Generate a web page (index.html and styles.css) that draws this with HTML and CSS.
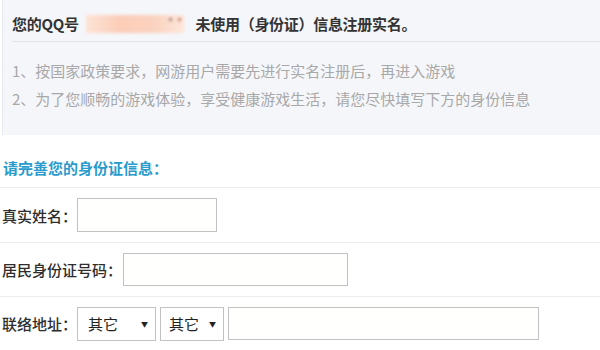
FILE: index.html
```html
<!DOCTYPE html>
<html lang="zh-CN">
<head>
<meta charset="utf-8">
<title>实名注册</title>
<link rel="stylesheet" href="styles.css">
</head>
<body>
<div class="panel">
  <div class="title">
    <span>您的QQ号</span><span class="masked"><span class="dot d1"></span><span class="dot d2"></span></span><span>未使用（身份证）信息注册实名。</span>
  </div>
  <div class="notes">
    <p>1、按国家政策要求，网游用户需要先进行实名注册后，再进入游戏</p>
    <p>2、为了您顺畅的游戏体验，享受健康游戏生活，请您尽快填写下方的身份信息</p>
  </div>
</div>
<div class="heading">请完善您的身份证信息：</div>
<div class="row r1">
  <label class="label">真实姓名：</label><input class="field f-name" type="text">
</div>
<div class="row r2">
  <label class="label">居民身份证号码：</label><input class="field f-id" type="text">
</div>
<div class="row r3">
  <label class="label">联络地址：</label>
  <div class="select s1"><span>其它</span><span class="arrow">▼</span></div>
  <div class="select s2"><span>其它</span><span class="arrow">▼</span></div>
  <input class="field f-addr" type="text">
</div>
</body>
</html>
```
FILE: styles.css
```css
html, body {
  margin: 0;
  padding: 0;
  background: #ffffff;
}
body {
  font-family: "Noto Sans CJK SC", "Microsoft YaHei", sans-serif;
  font-size: 15px;
  color: #333333;
  width: 600px;
  height: 350px;
  overflow: hidden;
}
.panel {
  margin-left: 2px;
  border-left: 1px solid #e6e8ee;
  background: #f5f6fa;
  height: 135px;
  padding-left: 9px;
  box-sizing: border-box;
}
.title {
  display: flex;
  align-items: center;
  height: 42px;
  padding-top: 6px;
  box-sizing: border-box;
  border-bottom: 1px solid #e2e4ea;
  font-weight: bold;
  line-height: 20px;
  color: #333;
  letter-spacing: -0.3px;
}
.masked {
  position: relative;
  display: inline-block;
  width: 98px;
  height: 18px;
  margin: 0 12px 0 7px;
  background: linear-gradient(90deg, #fde3d6 0%, #fbcdb8 35%, #fad2c0 70%, #fde6da 100%);
  filter: blur(1.5px);
}
.dot {
  position: absolute;
  top: 3px;
  width: 3px;
  height: 3px;
  border-radius: 50%;
  background: #8a6a5a;
}
.d1 { left: 83px; }
.d2 { left: 92px; background: #b06a4a; }
.notes {
  padding-top: 15px;
  color: #a8a8a8;
  line-height: 28px;
}
.notes p {
  margin: 0;
}
.heading {
  padding: 23px 0 9px 3px;
  line-height: 20px;
  color: #2a9bcd;
  font-weight: bold;
  border-bottom: 1px solid #ececec;
}
.row {
  display: flex;
  align-items: center;
  padding-left: 2px;
  border-bottom: 1px solid #ececec;
}
.r1 { height: 54px; }
.r2 { height: 53px; }
.r3 { height: 53px; border-bottom: none; }
.label {
  color: #2e2e2e;
  font-weight: 500;
  white-space: nowrap;
}
.field {
  box-sizing: border-box;
  border: 1px solid #c2c2c2;
  background: #fffffd;
  margin: 0;
  padding: 0 6px;
  font: inherit;
  outline: none;
}
.f-name { width: 140px; height: 34px; }
.f-id { width: 225px; height: 33px; margin-left: 1px; }
.f-addr { width: 311px; height: 33px; margin-left: 4px; }
.select {
  box-sizing: border-box;
  display: flex;
  align-items: center;
  justify-content: space-between;
  height: 34px;
  border: 1px solid #c2c2c2;
  background: #ffffff;
  padding: 0 7px 0 10px;
  color: #222;
}
.s1 { width: 79px; }
.s2 { width: 64px; margin-left: 4px; padding-left: 8px; }
.arrow {
  font-size: 7px;
  color: #222;
}
```
